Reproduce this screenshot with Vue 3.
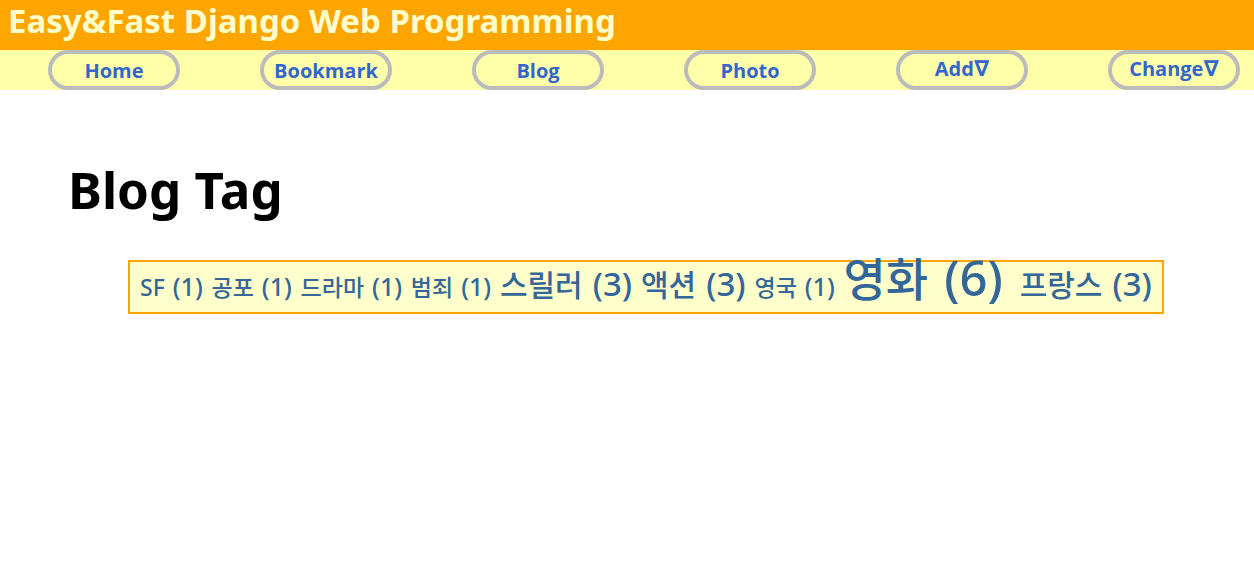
<script setup>
const nav = [
  { label: 'Home' },
  { label: 'Bookmark' },
  { label: 'Blog' },
  { label: 'Photo' },
  { label: 'Add', drop: true },
  { label: 'Change', drop: true },
]
const tags = [
  { name: 'SF', count: 1, size: 'small' },
  { name: '공포', count: 1, size: 'small' },
  { name: '드라마', count: 1, size: 'small' },
  { name: '범죄', count: 1, size: 'small' },
  { name: '스릴러', count: 3, size: 'medium' },
  { name: '액션', count: 3, size: 'medium' },
  { name: '영국', count: 1, size: 'small' },
  { name: '영화', count: 6, size: 'large' },
  { name: '프랑스', count: 3, size: 'medium' },
]
</script>

<template>
  <header class="banner">Easy&amp;Fast Django Web Programming</header>
  <nav class="menu">
    <a v-for="item in nav" :key="item.label" href="#" class="item" :class="{ drop: item.drop }">{{ item.label }}<span v-if="item.drop" class="arrow">∇</span></a>
  </nav>
  <main class="content">
    <h1>Blog Tag</h1>
    <div class="cloud">
      <a v-for="tag in tags" :key="tag.name" href="#" class="tag" :class="tag.size">
        <span class="name">{{ tag.name }}</span>
        <span class="count">({{ tag.count }})</span>
      </a>
    </div>
  </main>
</template>

<style>
body {
  background: #fff;
  font-family: "Noto Sans", "Noto Sans CJK KR", sans-serif;
}
</style>

<style scoped>
.banner {
  padding: 0 8px 8px;
  background: orange;
  color: #ffc;
  font-weight: bold;
  font-size: 33px;
  line-height: 42px;
}
.menu {
  display: flex;
  justify-content: space-between;
  padding: 0 14px 0 48px;
  background: #ffa;
}
.item {
  width: 132px;
  height: 40px;
  box-sizing: border-box;
  border: 4px solid #bbb;
  border-radius: 20px;
  color: #36c;
  font: bold 20px/34px "Open Sans", sans-serif;
  text-align: center;
  text-decoration: none;
  white-space: nowrap;
}
.drop {
  line-height: 30px;
}
.arrow {
  font-family: "DejaVu Sans", sans-serif;
  font-size: 22px;
}
.content {
  padding: 64px 90px 0 68px;
}
h1 {
  margin: 0 0 36px;
  font-size: 51px;
  line-height: 70px;
}
.cloud {
  display: flex;
  justify-content: space-between;
  align-items: baseline;
  min-height: 54px;
  box-sizing: border-box;
  margin-left: 60px;
  padding: 0 10px;
  border: 2px solid orange;
  background: #ffc;
  font-weight: 500;
  line-height: 30px;
  white-space: nowrap;
}
.tag {
  display: flex;
  align-items: baseline;
  color: #369;
  text-decoration: none;
}
.small {
  gap: 8px;
  font-size: 23px;
}
.small .count {
  font-size: 25px;
}
.medium {
  gap: 10px;
  font-size: 30px;
}
.medium .count {
  font-size: 33px;
}
.large {
  gap: 16px;
  margin-right: 8px;
  font-size: 46px;
}
.large .count {
  font-size: 49px;
}
</style>
